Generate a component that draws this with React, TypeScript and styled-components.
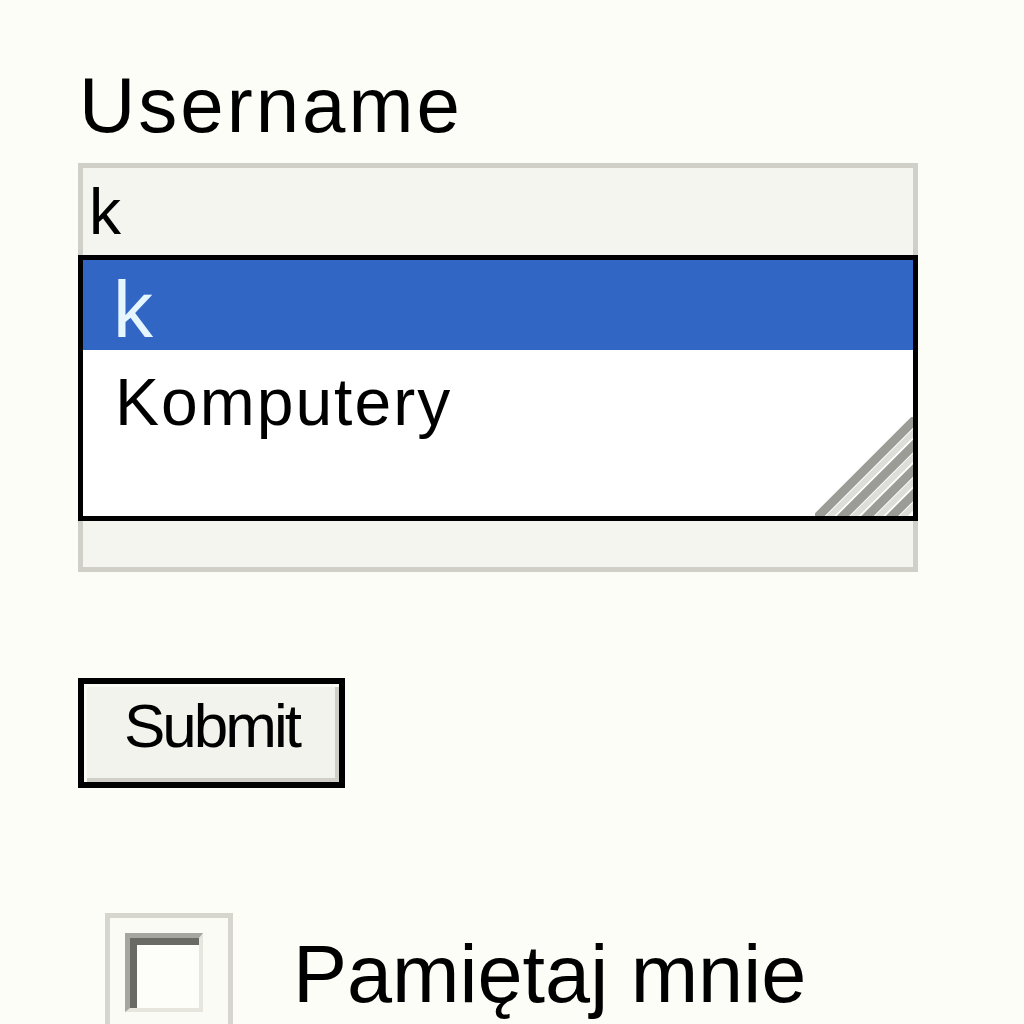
import React from "react";
import styled, { createGlobalStyle } from "styled-components";

const GlobalStyle = createGlobalStyle`
  html, body {
    margin: 0;
    padding: 0;
    background: #fdfdf7;
    overflow: hidden;
  }
  body {
    font-family: "Liberation Sans", Arial, sans-serif;
    color: #000;
  }
`;

const suggestions = ["k", "Komputery"];

const App = () => {
  return (
    <>
      <GlobalStyle />
      <Page>
        <Label>Username</Label>
        <Field>
          <Typed>k</Typed>
          <Suggestions>
            {suggestions.map((s, i) => (
              <Option key={s} $active={i === 0}>
                {s}
              </Option>
            ))}
            <Grip viewBox="0 0 100 100" width={98} height={99}>
              {[0, 25, 50, 75].map((d) => (
                <g key={d}>
                  <line x1={d} y1={104} x2={104} y2={d} stroke="#9c9c96" strokeWidth={9} />
                  <line x1={d + 12} y1={104} x2={104} y2={d + 12} stroke="#deded8" strokeWidth={6} />
                </g>
              ))}
            </Grip>
          </Suggestions>
        </Field>
        <SubmitButton type="button">Submit</SubmitButton>
        <RememberRow>
          <CheckOuter>
            <CheckInner />
          </CheckOuter>
          <RememberText>Pamiętaj mnie</RememberText>
        </RememberRow>
      </Page>
    </>
  );
};

export default App;

const Page = styled.div`
  padding: 66px 0 0 79px;
  display: flex;
  flex-direction: column;
  align-items: flex-start;
`;

const Label = styled.div`
  font-size: 78px;
  line-height: 1;
  letter-spacing: 3px;
  margin-bottom: 19px;
`;

const Field = styled.div`
  position: relative;
  box-sizing: border-box;
  width: 840px;
  height: 409px;
  margin-left: -1px;
  border: 5px solid #d0d0c8;
  background: #f5f5ef;
  padding: 12px 0 0 6px;
`;

const Typed = styled.div`
  font-size: 64px;
  line-height: 1;
`;

const Suggestions = styled.div`
  position: absolute;
  left: -5px;
  top: 87px;
  box-sizing: border-box;
  width: 840px;
  height: 266px;
  border: 5px solid #000;
  background: #fff;
`;

const Option = styled.div<{ $active: boolean }>`
  box-sizing: border-box;
  height: ${(p) => (p.$active ? "90px" : "100px")};
  padding: ${(p) => (p.$active ? "10px 0 0 30px" : "19px 0 0 32px")};
  font-size: ${(p) => (p.$active ? "80px" : "66px")};
  letter-spacing: ${(p) => (p.$active ? "0" : "2px")};
  line-height: 1;
  background: ${(p) => (p.$active ? "#3166c5" : "transparent")};
  color: ${(p) => (p.$active ? "#e6f6ff" : "#000")};
`;

const Grip = styled.svg`
  position: absolute;
  right: 0;
  bottom: 0;
  display: block;
`;

const SubmitButton = styled.button`
  margin-top: 106px;
  margin-left: -1px;
  box-sizing: border-box;
  width: 267px;
  height: 110px;
  border: 6px solid #000;
  background: #f3f3ed;
  box-shadow: inset 3px 3px 0 #fbfbf6, inset -4px -4px 0 #cfcfc7;
  font-family: "Liberation Sans", Arial, sans-serif;
  font-size: 62px;
  line-height: 1;
  letter-spacing: -3px;
  color: #000;
  padding: 0 0 14px 0;
  border-radius: 0;
`;

const RememberRow = styled.div`
  margin-top: 125px;
  margin-left: 26px;
  display: flex;
  align-items: flex-start;
  gap: 60px;
`;

const CheckOuter = styled.div`
  box-sizing: border-box;
  width: 128px;
  height: 128px;
  border: 5px solid #d6d6ce;
  background: #fbfbf5;
  padding: 15px 0 0 15px;
`;

const CheckInner = styled.div`
  box-sizing: border-box;
  width: 78px;
  height: 79px;
  background: #fdfdf9;
  border-top: 5px solid #a6a6a0;
  border-left: 5px solid #a6a6a0;
  border-right: 4px solid #e6e6de;
  border-bottom: 4px solid #e6e6de;
  box-shadow: inset 7px 7px 0 #6a6a64;
`;

const RememberText = styled.div`
  margin-top: 21px;
  font-size: 81px;
  line-height: 1;
`;
